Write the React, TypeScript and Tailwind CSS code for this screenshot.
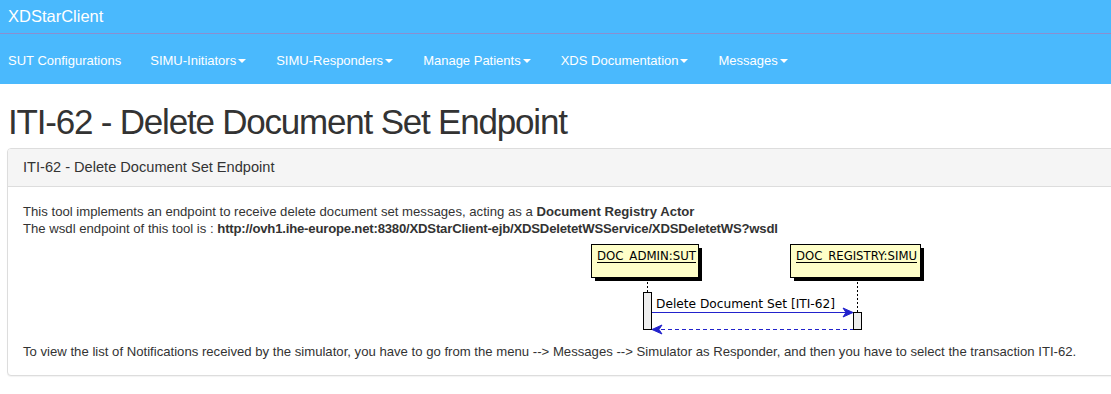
import React from "react";

const Caret = () => (
  <span className="ml-[2px] inline-block h-0 w-0 border-x-[4px] border-t-[4px] border-x-transparent border-t-white align-middle" />
);

const navItems: { label: string; caret: boolean }[] = [
  { label: "SUT Configurations", caret: false },
  { label: "SIMU-Initiators", caret: true },
  { label: "SIMU-Responders", caret: true },
  { label: "Manage Patients", caret: true },
  { label: "XDS Documentation", caret: true },
  { label: "Messages", caret: true },
];

function Diagram() {
  const dv = { fontFamily: "'DejaVu Sans', sans-serif" };
  return (
    <svg width="344" height="106" viewBox="0 0 344 106" className="ml-[563px] block">
      <rect x="9" y="11" width="107" height="33" fill="#000" />
      <rect x="5.5" y="7.5" width="107" height="33" fill="#fefec8" stroke="#000" />
      <text x="11" y="23" fontSize="11.5" fill="#000" style={dv} textLength="99" lengthAdjust="spacingAndGlyphs">DOC_ADMIN:SUT</text>
      <line x1="11" y1="25.5" x2="110" y2="25.5" stroke="#000" />
      <rect x="208" y="11" width="130" height="33" fill="#000" />
      <rect x="204.5" y="7.5" width="130" height="33" fill="#fefec8" stroke="#000" />
      <text x="210" y="23" fontSize="11.5" fill="#000" style={dv} textLength="121" lengthAdjust="spacingAndGlyphs">DOC_REGISTRY:SIMU</text>
      <line x1="210" y1="25.5" x2="331" y2="25.5" stroke="#000" />
      <line x1="61.5" y1="41" x2="61.5" y2="55" stroke="#000" strokeDasharray="2 2" />
      <line x1="271.5" y1="41" x2="271.5" y2="75" stroke="#000" strokeDasharray="2 2" />
      <rect x="57.5" y="55.5" width="8" height="37" fill="#eeeeee" stroke="#000" />
      <rect x="267.5" y="75.5" width="8" height="17" fill="#eeeeee" stroke="#000" />
      <text x="70" y="71" fontSize="12" fill="#000" style={dv} textLength="179" lengthAdjust="spacingAndGlyphs">Delete Document Set [ITI-62]</text>
      <line x1="66" y1="75.5" x2="264" y2="75.5" stroke="#2222cc" strokeWidth="1" />
      <polygon points="257,71 267,75.5 257,80 260,75.5" fill="#2222cc" stroke="#2222cc" />
      <line x1="68" y1="92.5" x2="267" y2="92.5" stroke="#2222cc" strokeDasharray="4 3" />
      <polygon points="76,88 66,92.5 76,97 73,92.5" fill="#2222cc" stroke="#2222cc" />
    </svg>
  );
}

export default function App() {
  return (
    <div
      className="w-[1111px] h-[394px] overflow-hidden bg-white text-[#333]"
      style={{ fontFamily: "'Liberation Sans', Arial, sans-serif" }}
    >
      <div className="bg-[#4ab9fd]">
        <div className="h-[33px] flex items-center pl-[8px] text-[16.5px] text-white">XDStarClient</div>
        <div className="h-px bg-[#8a8fd0]" />
        <div className="h-[50px] flex items-center pt-[4px] text-[13px] text-white pl-[8px]">
          {navItems.map((n, i) => (
            <div key={n.label} className={i === 0 ? "pr-[14px]" : "px-[15px] flex items-center"}>
              {n.label}
              {n.caret && <Caret />}
            </div>
          ))}
        </div>
      </div>
      <h1 className="mt-[18px] ml-[8px] text-[35px] tracking-[-1.2px] leading-[40px] text-[#333]">ITI-62 - Delete Document Set Endpoint</h1>
      <div className="mt-[6px] ml-[7px] w-[1130px] rounded-[4px] border border-[#ddd] bg-white shadow-[0_1px_1px_rgba(0,0,0,0.05)]">
        <div className="h-[38px] flex items-center px-[15px] bg-[#f5f5f5] border-b border-[#ddd] rounded-t-[3px] text-[14.6px]">
          ITI-62 - Delete Document Set Endpoint
        </div>
        <div className="pt-[16px] pb-[15px] px-[15px] text-[13.15px] leading-[17px]">
          <div>
            This tool implements an endpoint to receive delete document set messages, acting as a{" "}
            <b>Document Registry Actor</b>
          </div>
          <div>
            The wsdl endpoint of this tool is :{" "}
            <b className="tracking-[-0.2px]">http://ovh1.ihe-europe.net:8380/XDStarClient-ejb/XDSDeletetWSService/XDSDeletetWS?wsdl</b>
          </div>
          <Diagram />
          <div>
            To view the list of Notifications received by the simulator, you have to go from the menu --&gt; Messages --&gt; Simulator as Responder, and then you have to select the transaction ITI-62.
          </div>
        </div>
      </div>
    </div>
  );
}
